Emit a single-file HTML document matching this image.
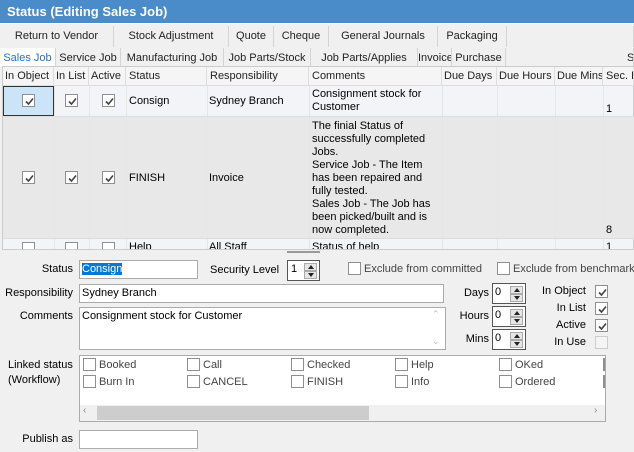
<!DOCTYPE html>
<html><head><meta charset="utf-8"><style>
*{margin:0;padding:0;box-sizing:border-box}
body{width:634px;height:452px;overflow:hidden;background:#f0f0f0;font-family:"Liberation Sans",sans-serif;font-size:11px;color:#000;position:relative}
.a{position:absolute;white-space:nowrap}
.tab{position:absolute;height:21px;line-height:21px;text-align:center;border-right:1px solid #d4d4d4;background:#f0f0f0;color:#222;white-space:nowrap;overflow:hidden}
.cb{position:absolute;width:13px;height:13px;border:1px solid #8f8f8f;background:#fff}
.cb svg{position:absolute;left:1px;top:1px}
.inp{position:absolute;background:#fff;border:1px solid #ababab;padding-left:2px;line-height:16px;white-space:nowrap}
.hd{position:absolute;top:67px;height:19px;line-height:19px;padding-left:3px;border-right:1px solid #ddd;color:#222;white-space:nowrap;overflow:hidden}
.vl{position:absolute;top:86px;height:163px;width:1px;background:#e6e6e6}
.spin{position:absolute;background:#fff;border:1px solid #555}
.spin .b{position:absolute;right:2px;width:13px;height:8px;background:#e6e6e6;border:1px solid #aaa}
.spin .b:after{content:"";position:absolute;left:3px;border-left:3px solid transparent;border-right:3px solid transparent}
.spin .u:after{top:1px;border-bottom:4px solid #222}
.spin .d:after{top:1px;border-top:4px solid #222}
.r{text-align:right}
</style></head><body>
<div class="a" style="left:0;top:0;width:634px;height:23px;background:#4a8bca;color:#fff;font-weight:bold;font-size:13px;line-height:23px;padding-left:7px">Status (Editing Sales Job)</div>
<div class="a" style="left:0;top:23px;width:634px;height:1px;background:#fff"></div>
<div class="tab" style="left:0;top:26px;width:114px">Return to Vendor</div>
<div class="tab" style="left:114px;top:26px;width:115px">Stock Adjustment</div>
<div class="tab" style="left:229px;top:26px;width:45px">Quote</div>
<div class="tab" style="left:274px;top:26px;width:55px">Cheque</div>
<div class="tab" style="left:329px;top:26px;width:109px">General Journals</div>
<div class="tab" style="left:438px;top:26px;width:69px">Packaging</div>
<div class="tab" style="left:507px;top:26px;width:127px"></div>
<div class="tab" style="left:0;top:48px;width:56px;color:#2c6fc0;background:#fff;height:19px">Sales Job</div>
<div class="tab" style="left:56px;top:48px;width:65px">Service Job</div>
<div class="tab" style="left:121px;top:48px;width:103px">Manufacturing Job</div>
<div class="tab" style="left:224px;top:48px;width:87px">Job Parts/Stock</div>
<div class="tab" style="left:311px;top:48px;width:107px">Job Parts/Applies</div>
<div class="tab" style="left:418px;top:48px;width:34px">Invoice</div>
<div class="tab" style="left:452px;top:48px;width:54px">Purchase</div>
<div class="tab" style="left:506px;top:48px;width:128px;text-align:left;padding-left:121px">S</div>
<div class="a" style="left:2px;top:66px;width:632px;height:184px;background:#f2f4f8;border:1px solid #ccc"></div>
<div class="a" style="left:3px;top:67px;width:631px;height:19px;background:#f5f5f5;border-bottom:1px solid #ddd"></div>
<div class="hd" style="left:3px;width:51px;padding-left:2px">In Object</div>
<div class="hd" style="left:54px;width:35px;padding-left:2px">In List</div>
<div class="hd" style="left:89px;width:37px;padding-left:2px">Active</div>
<div class="hd" style="left:126px;width:81px">Status</div>
<div class="hd" style="left:207px;width:102px">Responsibility</div>
<div class="hd" style="left:309px;width:133px">Comments</div>
<div class="hd" style="left:442px;width:55px;padding-left:2px">Due Days</div>
<div class="hd" style="left:497px;width:58px;padding-left:2px">Due Hours</div>
<div class="hd" style="left:555px;width:48px;padding-left:2px">Due Mins</div>
<div class="hd" style="left:603px;width:31px">Sec. L</div>
<div class="a" style="left:3px;top:117px;width:631px;height:121px;background:#e8e8e8"></div>
<div class="vl" style="left:54px"></div><div class="vl" style="left:89px"></div><div class="vl" style="left:126px"></div><div class="vl" style="left:207px"></div><div class="vl" style="left:309px"></div><div class="vl" style="left:442px"></div><div class="vl" style="left:497px"></div><div class="vl" style="left:555px"></div><div class="vl" style="left:603px"></div>
<div class="a" style="left:3px;top:86px;width:51px;height:30px;background:#cce4f7;border:1px solid #333"></div>
<div class="a" style="left:3px;top:116px;width:631px;height:1px;background:#ddd"></div>
<div class="a" style="left:3px;top:238px;width:631px;height:1px;background:#ddd"></div>

<div class="a" style="left:129px;top:95px">Consign</div>
<div class="a" style="left:209px;top:95px">Sydney Branch</div>
<div class="a" style="left:312px;top:88px;line-height:13px">Consignment stock for<br>Customer</div>
<div class="a" style="left:606px;top:103px">1</div>
<div class="a" style="left:129px;top:172px">FINISH</div>
<div class="a" style="left:209px;top:172px">Invoice</div>
<div class="a" style="left:312px;top:120px;line-height:13px">The finial Status of<br>successfully completed<br>Jobs.<br>Service Job - The Item<br>has been repaired and<br>fully tested.<br>Sales Job - The Job has<br>been picked/built and is<br>now completed.</div>
<div class="a" style="left:606px;top:224px">8</div>
<div style="position:absolute;left:3px;top:239px;width:631px;height:10px;overflow:hidden">
<div class="a" style="left:126px;top:2px">Help</div><div class="a" style="left:206px;top:2px">All Staff</div><div class="a" style="left:309px;top:2px">Status of help</div><div class="a" style="left:603px;top:2px">1</div>
<div class="cb" style="left:19px;top:3px"></div><div class="cb" style="left:62px;top:3px"></div><div class="cb" style="left:99px;top:3px"></div>
</div>
<div class="a" style="left:287px;top:251px;width:33px;height:2px;background:#999"></div>

<div class="a r" style="left:0;top:263px;width:73px">Status</div>
<div class="inp" style="left:79px;top:260px;width:119px;height:19px"><span style="background:#0078d7;color:#fff">Consign</span></div>
<div class="a" style="left:210px;top:264px">Security Level</div>
<div class="spin" style="left:287px;top:260px;width:33px;height:21px"><span style="position:absolute;left:3px;top:2px">1</span><div class="b u" style="top:2px"></div><div class="b d" style="top:10px"></div></div>
<div class="a" style="left:364px;top:263px;color:#444">Exclude from committed</div>
<div class="a" style="left:513px;top:263px;color:#444">Exclude from benchmark</div>
<div class="a r" style="left:0;top:287px;width:73px">Responsibility</div>
<div class="inp" style="left:79px;top:284px;width:365px;height:19px">Sydney Branch</div>
<div class="a r" style="left:0;top:310px;width:73px">Comments</div>
<div class="inp" style="left:79px;top:307px;width:367px;height:43px;line-height:17px">Consignment stock for Customer</div>
<div class="a" style="left:432px;top:309px;color:#bbb;font-size:9px">&#8963;</div>
<div class="a" style="left:432px;top:336px;color:#bbb;font-size:9px">&#8964;</div>
<div class="a r" style="left:440px;top:287px;width:49px">Days</div>
<div class="a r" style="left:440px;top:310px;width:49px">Hours</div>
<div class="a r" style="left:440px;top:333px;width:49px">Mins</div>
<div class="spin" style="left:492px;top:283px;width:34px;height:21px"><span style="position:absolute;left:2px;top:2px">0</span><div class="b u" style="top:2px"></div><div class="b d" style="top:10px"></div></div>
<div class="spin" style="left:492px;top:306px;width:34px;height:21px"><span style="position:absolute;left:2px;top:2px">0</span><div class="b u" style="top:2px"></div><div class="b d" style="top:10px"></div></div>
<div class="spin" style="left:492px;top:329px;width:34px;height:21px"><span style="position:absolute;left:2px;top:2px">0</span><div class="b u" style="top:2px"></div><div class="b d" style="top:10px"></div></div>
<div class="a r" style="left:520px;top:285px;width:66px">In Object</div>
<div class="a r" style="left:520px;top:302px;width:66px">In List</div>
<div class="a r" style="left:520px;top:319px;width:66px">Active</div>
<div class="a r" style="left:520px;top:336px;width:66px">In Use</div>
<div class="a" style="left:8px;top:358px;line-height:15px">Linked status<br>(Workflow)</div>
<div class="a" style="left:79px;top:355px;width:527px;height:67px;background:#fff;border:1px solid #ababab"></div>
<div class="a" style="left:80px;top:405px;width:525px;height:16px;background:#f0f0f0"></div>
<div class="a" style="left:97px;top:406px;width:272px;height:14px;background:#cdcdcd"></div>
<div class="a" style="left:83px;top:405px;color:#888;font-size:10px">&#8249;</div>
<div class="a" style="left:594px;top:405px;color:#888;font-size:10px">&#8250;</div>
<div class="a" style="left:99px;top:359px;color:#444">Booked</div>
<div class="a" style="left:99px;top:376px;color:#444">Burn In</div>
<div class="a" style="left:203px;top:359px;color:#444">Call</div>
<div class="a" style="left:203px;top:376px;color:#444">CANCEL</div>
<div class="a" style="left:307px;top:359px;color:#444">Checked</div>
<div class="a" style="left:307px;top:376px;color:#444">FINISH</div>
<div class="a" style="left:411px;top:359px;color:#444">Help</div>
<div class="a" style="left:411px;top:376px;color:#444">Info</div>
<div class="a" style="left:515px;top:359px;color:#444">OKed</div>
<div class="a" style="left:515px;top:376px;color:#444">Ordered</div>
<div class="a r" style="left:0;top:433px;width:73px">Publish as</div>
<div class="inp" style="left:79px;top:430px;width:119px;height:19px"></div>

<div class="cb" style="left:22px;top:94px"><svg width="11" height="11"><path d="M2 5.5 L4.5 8 L9 2.5" stroke="#444" stroke-width="1.6" fill="none"/></svg></div>
<div class="cb" style="left:65px;top:94px"><svg width="11" height="11"><path d="M2 5.5 L4.5 8 L9 2.5" stroke="#444" stroke-width="1.6" fill="none"/></svg></div>
<div class="cb" style="left:102px;top:94px"><svg width="11" height="11"><path d="M2 5.5 L4.5 8 L9 2.5" stroke="#444" stroke-width="1.6" fill="none"/></svg></div>
<div class="cb" style="left:22px;top:171px"><svg width="11" height="11"><path d="M2 5.5 L4.5 8 L9 2.5" stroke="#444" stroke-width="1.6" fill="none"/></svg></div>
<div class="cb" style="left:65px;top:171px"><svg width="11" height="11"><path d="M2 5.5 L4.5 8 L9 2.5" stroke="#444" stroke-width="1.6" fill="none"/></svg></div>
<div class="cb" style="left:102px;top:171px"><svg width="11" height="11"><path d="M2 5.5 L4.5 8 L9 2.5" stroke="#444" stroke-width="1.6" fill="none"/></svg></div>
<div class="cb" style="left:348px;top:262px"></div>
<div class="cb" style="left:497px;top:262px"></div>
<div class="cb" style="left:595px;top:285px"><svg width="11" height="11"><path d="M2 5.5 L4.5 8 L9 2.5" stroke="#444" stroke-width="1.6" fill="none"/></svg></div>
<div class="cb" style="left:595px;top:302px"><svg width="11" height="11"><path d="M2 5.5 L4.5 8 L9 2.5" stroke="#444" stroke-width="1.6" fill="none"/></svg></div>
<div class="cb" style="left:595px;top:319px"><svg width="11" height="11"><path d="M2 5.5 L4.5 8 L9 2.5" stroke="#444" stroke-width="1.6" fill="none"/></svg></div>
<div class="cb" style="left:595px;top:336px;background:#f4f4f4;border-color:#ccc"></div>
<div class="cb" style="left:83px;top:358px"></div><div class="cb" style="left:83px;top:375px"></div>
<div class="cb" style="left:187px;top:358px"></div><div class="cb" style="left:187px;top:375px"></div>
<div class="cb" style="left:291px;top:358px"></div><div class="cb" style="left:291px;top:375px"></div>
<div class="cb" style="left:395px;top:358px"></div><div class="cb" style="left:395px;top:375px"></div>
<div class="cb" style="left:499px;top:358px"></div><div class="cb" style="left:499px;top:375px"></div>
<div class="cb" style="left:603px;top:358px;width:2px"></div><div class="cb" style="left:603px;top:375px;width:2px"></div>
</body></html>
